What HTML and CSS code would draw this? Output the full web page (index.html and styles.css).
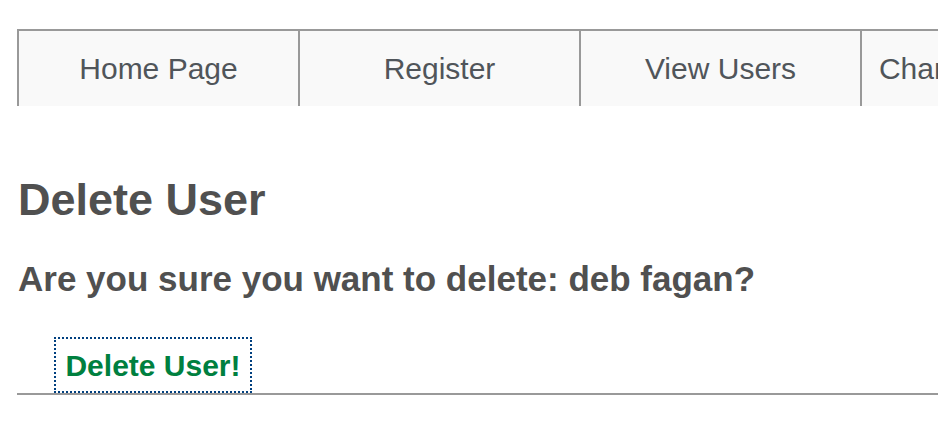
FILE: index.html
```html
<!DOCTYPE html>
<html>
<head>
<meta charset="utf-8">
<title>Delete User</title>
<link rel="stylesheet" href="styles.css">
</head>
<body>
<div class="page">
  <nav class="nav">
    <a class="nav-item" href="#">Home Page</a>
    <a class="nav-item" href="#">Register</a>
    <a class="nav-item" href="#">View Users</a>
    <a class="nav-item" href="#">Change Password</a>
  </nav>
  <h1 class="title">Delete User</h1>
  <h2 class="question">Are you sure you want to delete: deb fagan?</h2>
  <form class="confirm">
    <button type="button" class="delete-btn">Delete User!</button>
  </form>
</div>
</body>
</html>
```
FILE: styles.css
```css
html, body {
  margin: 0;
  padding: 0;
  background: #fff;
  overflow: hidden;
}
body {
  font-family: "Liberation Sans", Arial, sans-serif;
}
.page {
  padding: 29px 0 0 17px;
  width: 1400px;
}
.nav {
  display: flex;
  border-top: 2px solid #999;
  width: max-content;
}
.nav-item {
  display: flex;
  align-items: center;
  justify-content: center;
  width: 279px;
  height: 75px;
  padding-top: 1px;
  box-sizing: border-box;
  border-left: 2px solid #999;
  background: #f9f9f9;
  color: #50555a;
  font-size: 30px;
  text-decoration: none;
  white-space: nowrap;
}
.nav-item {
  width: 281px;
}
.title {
  margin: 69px 0 0 1px;
  font-size: 45px;
  line-height: 50px;
  font-weight: bold;
  color: #505050;
}
.question {
  margin: 34px 0 0 1px;
  font-size: 35px;
  line-height: 40px;
  font-weight: bold;
  color: #505050;
}
.confirm {
  margin: 38px 0 0 0;
  padding-left: 37px;
  border-bottom: 2px solid #999;
  width: 921px;
  display: flex;
}
.delete-btn {
  box-sizing: border-box;
  width: 198px;
  height: 56px;
  padding: 2px 0 0;
  border: 2px dotted #003f7f;
  background: #fff;
  color: #00803f;
  font-family: "Liberation Sans", Arial, sans-serif;
  font-size: 30px;
  font-weight: bold;
  line-height: 50px;
  text-align: center;
}
```
